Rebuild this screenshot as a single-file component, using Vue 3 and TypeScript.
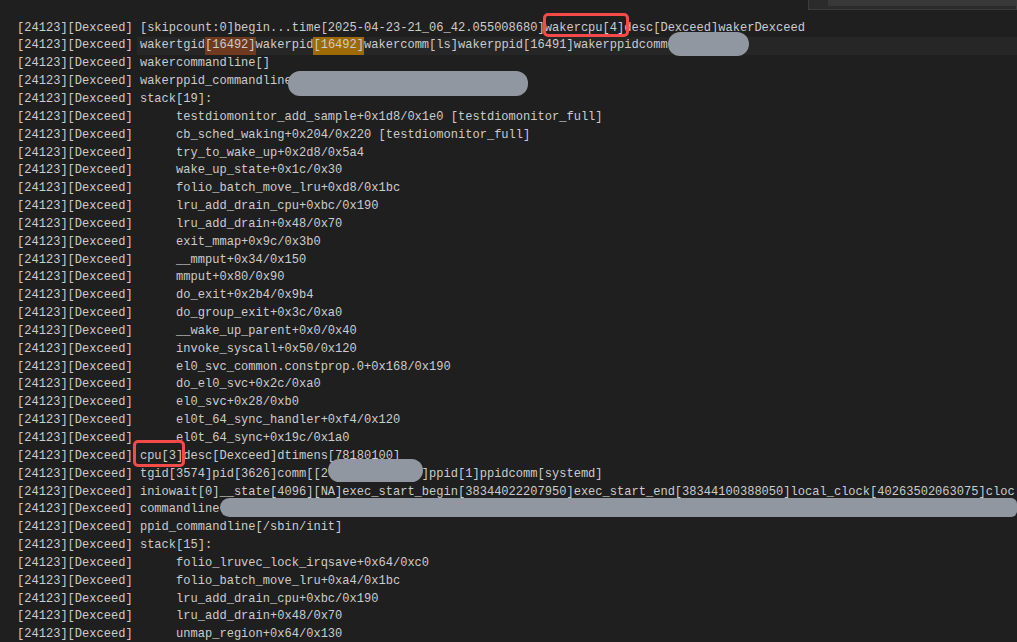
<script setup lang="ts">
interface Seg { t: string; c?: string }
const p = '[24123][Dexceed] '
const lines: Seg[][] = [
  [{ t: p + '[skipcount:0]begin...time[2025-04-23-21_06_42.055008680]wakercpu[4]desc[Dexceed]wakerDexceed' }],
  [{ t: p + 'wakertgid' }, { t: '[16492]', c: 'hl1' }, { t: 'wakerpid' }, { t: '[16492]', c: 'hl2' }, { t: 'wakercomm[ls]wakerppid[16491]wakerppidcomm' }],
  [{ t: p + 'wakercommandline[]' }],
  [{ t: p + 'wakerppid_commandline' }],
  [{ t: p + 'stack[19]:' }],
  ...[
    'testdiomonitor_add_sample+0x1d8/0x1e0 [testdiomonitor_full]',
    'cb_sched_waking+0x204/0x220 [testdiomonitor_full]',
    'try_to_wake_up+0x2d8/0x5a4',
    'wake_up_state+0x1c/0x30',
    'folio_batch_move_lru+0xd8/0x1bc',
    'lru_add_drain_cpu+0xbc/0x190',
    'lru_add_drain+0x48/0x70',
    'exit_mmap+0x9c/0x3b0',
    '__mmput+0x34/0x150',
    'mmput+0x80/0x90',
    'do_exit+0x2b4/0x9b4',
    'do_group_exit+0x3c/0xa0',
    '__wake_up_parent+0x0/0x40',
    'invoke_syscall+0x50/0x120',
    'el0_svc_common.constprop.0+0x168/0x190',
    'do_el0_svc+0x2c/0xa0',
    'el0_svc+0x28/0xb0',
    'el0t_64_sync_handler+0xf4/0x120',
    'el0t_64_sync+0x19c/0x1a0',
  ].map((s) => [{ t: p + '     ' + s }]),
  [{ t: p + 'cpu[3]desc[Dexceed]dtimens[78180100]' }],
  [{ t: p + 'tgid[3574]pid[3626]comm[[2             ]ppid[1]ppidcomm[systemd]' }],
  [{ t: p + 'iniowait[0]__state[4096][NA]exec_start_begin[38344022207950]exec_start_end[38344100388050]local_clock[40263502063075]cloc' }],
  [{ t: p + 'commandline' }],
  [{ t: p + 'ppid_commandline[/sbin/init]' }],
  [{ t: p + 'stack[15]:' }],
  ...[
    'folio_lruvec_lock_irqsave+0x64/0xc0',
    'folio_batch_move_lru+0xa4/0x1bc',
    'lru_add_drain_cpu+0xbc/0x190',
    'lru_add_drain+0x48/0x70',
    'unmap_region+0x64/0x130',
  ].map((s) => [{ t: p + '     ' + s }]),
]
</script>

<template>
  <div class="page">
    <div class="findbox"><div class="findinput"></div></div>
    <div class="log">
      <div v-for="(segs, i) in lines" :key="i" class="line" :class="{ cur: i === 1 }">
        <span v-for="(s, j) in segs" :key="j" :class="s.c">{{ s.t }}</span>
      </div>
    </div>
    <i class="mask" style="left:668px;top:32px;width:81px;height:24px"></i>
    <i class="mask" style="left:288px;top:71px;width:240px;height:25px"></i>
    <i class="mask" style="left:328px;top:459px;width:95px;height:23px"></i>
    <i class="mask" style="left:220px;top:498px;width:797px;height:19px;border-radius:10px 6px 6px 10px"></i>
    <i class="red" style="left:543px;top:13px;width:86px;height:24px"></i>
    <i class="red" style="left:133px;top:440px;width:52px;height:27px"></i>
  </div>
</template>

<style scoped>
.page {
  position: relative;
  width: 1017px;
  height: 642px;
  overflow: hidden;
  background: #1f1f1f;
}
.log {
  padding-top: 19.6px;
  font-family: "Liberation Mono", monospace;
  font-size: 12.05px;
  color: #cccccc;
  white-space: pre;
}
.line {
  height: 17.85px;
  line-height: 17.85px;
  padding-left: 17px;
}
.cur {
  background: #262626;
  margin-left: 137px;
  padding-left: 0;
  text-indent: -120px;
}
.hl1,
.hl2 {
  display: inline-block;
  height: 17.85px;
  text-indent: 0;
}
.hl1 {
  background: #6f3a1f;
}
.hl2 {
  background: #9e6a03;
}
.findbox {
  position: absolute;
  right: 0;
  top: -12px;
  width: 209px;
  height: 22px;
  box-sizing: border-box;
  background: #2b2b2b;
  border: 1px solid #3c3c3c;
}
.findinput {
  margin: 0 0 0 19px;
  height: 17px;
  background: #383838;
}
.mask {
  position: absolute;
  background: #9197a1;
  border-radius: 12px;
}
.red {
  position: absolute;
  box-sizing: border-box;
  border: 3px solid #f54a4a;
  border-radius: 5px;
}
</style>
<style>
html, body { margin: 0; background: #1f1f1f; }
</style>
